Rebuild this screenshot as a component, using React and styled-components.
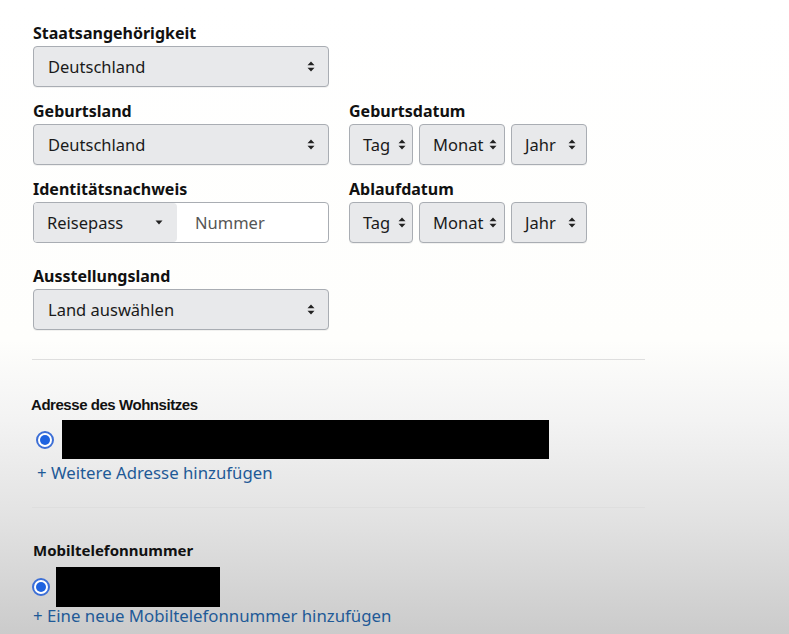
import React from "react";
import styled, { createGlobalStyle } from "styled-components";

const Global = createGlobalStyle`
  html, body { margin: 0; padding: 0; }
  body {
    width: 789px;
    height: 634px;
    overflow: hidden;
    font-family: "Noto Sans", "Open Sans", sans-serif;
    color: #111;
    background: linear-gradient(to bottom, #ffffff 0px, #fefefc 340px, #f3f3f3 420px, #e2e2e2 520px, #cbcbcb 634px);
  }
`;

const Page = styled.div`
  padding: 23px 0 0 33px;
`;

const Grid = styled.div`
  display: grid;
  grid-template-columns: 296px 240px;
  column-gap: 20px;
  row-gap: 14px;
  align-items: start;
`;

const Field = styled.div`
  display: flex;
  flex-direction: column;
  gap: 3px;
  margin-top: ${(p) => p.$mt || 0}px;
`;

const Label = styled.div`
  font-size: 16px;
  font-weight: 700;
  line-height: 20px;
  color: #111;
`;

const SelectBox = styled.div`
  box-sizing: border-box;
  width: ${(p) => p.$w}px;
  height: 41px;
  display: flex;
  align-items: center;
  justify-content: space-between;
  padding: 0 ${(p) => p.$pr || 13}px 0 ${(p) => p.$pl || 14}px;
  background: #e8e9eb;
  border: 1px solid #a9adb3;
  border-radius: 4px;
  box-shadow: 0 1px 0 rgba(0, 0, 0, 0.05);
  font-size: 16.5px;
  color: #1a1a1a;
`;

const DateRow = styled.div`
  display: flex;
  gap: 6px;
`;

const Combo = styled.div`
  box-sizing: border-box;
  width: 296px;
  height: 41px;
  display: flex;
  border: 1px solid #a9adb3;
  border-radius: 4px;
  overflow: hidden;
  background: #fff;
`;

const ComboSelect = styled.div`
  width: 143px;
  display: flex;
  align-items: center;
  justify-content: space-between;
  padding: 0 14px 0 13px;
  box-sizing: border-box;
  background: #e8e9eb;
  border-radius: 0 4px 4px 0;
  font-size: 16.5px;
  color: #1a1a1a;
`;

const ComboInput = styled.div`
  flex: 1;
  display: flex;
  align-items: center;
  padding-left: 18px;
  font-size: 16.5px;
  color: #555;
`;

const Divider = styled.hr`
  width: 613px;
  margin: ${(p) => p.$mt}px 0 0 -1px;
  border: 0;
  height: 1px;
  background: #dedede;
`;

const SectionLabel = styled.div`
  font-family: ${(p) => (p.$arial ? '"Liberation Sans", Arial, sans-serif' : '"Noto Sans", sans-serif')};
  font-size: 15px;
  letter-spacing: ${(p) => (p.$arial ? -0.45 : 0)}px;
  font-weight: 700;
  line-height: 20px;
  color: #111;
  margin-top: ${(p) => p.$mt}px;
  margin-left: ${(p) => p.$ml || 0}px;
`;

const RadioRow = styled.div`
  display: flex;
  align-items: center;
  gap: ${(p) => p.$gap}px;
  margin-top: ${(p) => p.$mt}px;
  margin-left: ${(p) => p.$ml}px;
`;

const Radio = styled.span`
  box-sizing: border-box;
  width: 18px;
  height: 18px;
  border-radius: 50%;
  border: 2px solid #3d6fd6;
  background: #fff;
  display: flex;
  align-items: center;
  justify-content: center;
  &::after {
    content: "";
    width: 10px;
    height: 10px;
    border-radius: 50%;
    background: #1f63e0;
  }
`;

const Redacted = styled.div`
  width: ${(p) => p.$w}px;
  height: ${(p) => p.$h}px;
  background: #000;
`;

const Link = styled.div`
  font-size: 16.8px;
  line-height: 20px;
  color: #1f5a97;
  margin-top: ${(p) => p.$mt}px;
  margin-left: ${(p) => p.$ml || 0}px;
`;

const UpDown = () => (
  <svg width="8" height="11" viewBox="0 0 8 11">
    <path d="M4 0.5 L7.5 4.2 H0.5 Z M4 10.5 L7.5 6.8 H0.5 Z" fill="#222" />
  </svg>
);

const Caret = () => (
  <svg width="8" height="5" viewBox="0 0 8 5">
    <path d="M0.5 0.5 H7.5 L4 4.5 Z" fill="#222" />
  </svg>
);

const Select = ({ w, children, pl, pr }) => (
  <SelectBox $w={w} $pl={pl} $pr={pr}>
    <span>{children}</span>
    <UpDown />
  </SelectBox>
);

const DateSelects = () => (
  <DateRow>
    <Select w={64} pl={13} pr={6}>Tag</Select>
    <Select w={86} pl={13} pr={7}>Monat</Select>
    <Select w={76} pl={13} pr={10}>Jahr</Select>
  </DateRow>
);

export default function App() {
  return (
    <>
      <Global />
      <Page>
        <Grid>
          <Field>
            <Label>Staatsangehörigkeit</Label>
            <Select w={296}>Deutschland</Select>
          </Field>
          <div />
          <Field>
            <Label>Geburtsland</Label>
            <Select w={296}>Deutschland</Select>
          </Field>
          <Field>
            <Label>Geburtsdatum</Label>
            <DateSelects />
          </Field>
          <Field>
            <Label>Identitätsnachweis</Label>
            <Combo>
              <ComboSelect>
                <span>Reisepass</span>
                <Caret />
              </ComboSelect>
              <ComboInput>Nummer</ComboInput>
            </Combo>
          </Field>
          <Field>
            <Label>Ablaufdatum</Label>
            <DateSelects />
          </Field>
          <Field $mt={9}>
            <Label>Ausstellungsland</Label>
            <Select w={296}>Land auswählen</Select>
          </Field>
        </Grid>

        <Divider $mt={29} />

        <SectionLabel $arial $mt={35} $ml={-2}>Adresse des Wohnsitzes</SectionLabel>
        <RadioRow $gap={8} $mt={5} $ml={3}>
          <Radio />
          <Redacted $w={487} $h={39} />
        </RadioRow>
        <Link $mt={4} $ml={4}>+ Weitere Adresse hinzufügen</Link>

        <Divider $mt={24} />

        <SectionLabel $mt={32}>Mobiltelefonnummer</SectionLabel>
        <RadioRow $gap={6} $mt={7} $ml={-1}>
          <Radio />
          <Redacted $w={164} $h={40} />
        </RadioRow>
        <Link $mt={-1}>+ Eine neue Mobiltelefonnummer hinzufügen</Link>
      </Page>
    </>
  );
}
